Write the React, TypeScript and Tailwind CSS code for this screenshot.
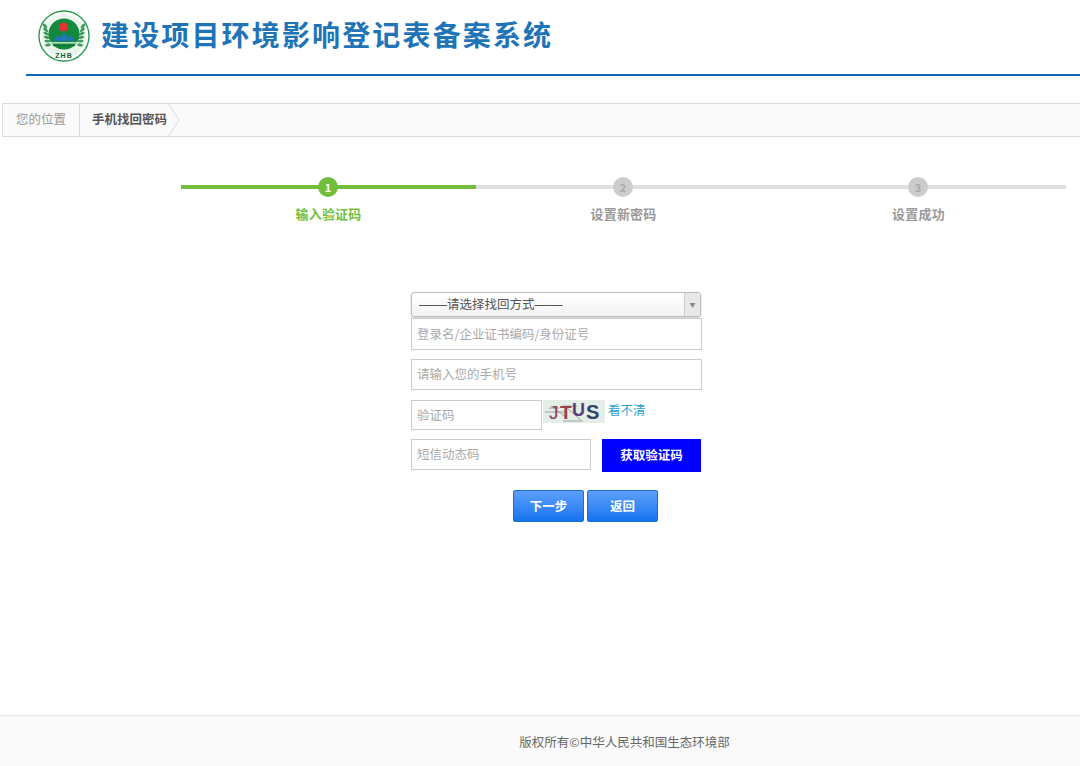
const font = { fontFamily: '"Noto Sans CJK SC", "Liberation Sans", sans-serif' };

const steps = [
  { n: 1, label: '输入验证码', active: true },
  { n: 2, label: '设置新密码', active: false },
  { n: 3, label: '设置成功', active: false },
];

function Logo() {
  const leaves = [0, 1, 2, 3, 4, 5];
  return (
    <svg width="52" height="52" viewBox="0 0 52 52" className="shrink-0">
      <circle cx="26" cy="26" r="25" fill="#fff" stroke="#2f9a52" strokeWidth="1.4" />
      <circle cx="26" cy="26" r="22" fill="#e9f4ec" />
      {leaves.map((i) => (
        <g key={i} fill="#3d9a58">
          <ellipse cx={7 + i * 0.6} cy={16 + i * 3.8} rx="3" ry="1.4" transform={`rotate(${50 - i * 12} ${7 + i * 0.6} ${16 + i * 3.8})`} />
          <ellipse cx={45 - i * 0.6} cy={16 + i * 3.8} rx="3" ry="1.4" transform={`rotate(${-50 + i * 12} ${45 - i * 0.6} ${16 + i * 3.8})`} />
        </g>
      ))}
      <circle cx="26" cy="24" r="15.5" fill="#128a3e" />
      <circle cx="25.5" cy="17" r="4.6" fill="#e5312f" />
      <path d="M15 31 L19 25 L21.5 28 L26 22.5 L30.5 28 L33 25 L37 31 Z" fill="#1f76b8" />
      <rect x="13" y="32" width="26" height="1.6" fill="#b9dcc0" />
      <rect x="15" y="35" width="22" height="1.2" fill="#0d6f30" />
      <text x="26" y="48" textAnchor="middle" fontSize="7" fontWeight="700" fill="#1f5c33" fontFamily="Liberation Sans, sans-serif" letterSpacing="1">ZHB</text>
    </svg>
  );
}

function Captcha() {
  return (
    <svg width="62" height="23" viewBox="0 0 62 23" className="shrink-0 bg-[#e4ede8]">
      <path d="M2 12 H22 M8 6 L24 18 M20 21 H40 M24 8 L38 20 M6 8 H16 M20 6 H34" stroke="#8a8f8a" strokeWidth="0.8" fill="none" />
      <text x="6" y="18.5" fontSize="19" fill="#8d3f55" fontFamily="Liberation Sans, sans-serif">J</text>
      <text x="17" y="18.5" fontSize="19" fontWeight="700" fill="#9a4048" fontFamily="Liberation Sans, sans-serif">T</text>
      <text x="29" y="16" fontSize="18" fontWeight="700" fill="#5d3f7c" fontFamily="Liberation Sans, sans-serif">U</text>
      <text x="43" y="18.5" fontSize="20" fontWeight="700" fill="#2f4468" fontFamily="Liberation Sans, sans-serif">S</text>
    </svg>
  );
}

export default function App() {
  return (
    <div className="min-h-[766px] flex flex-col bg-white text-[#333]" style={font}>
      <header className="ml-[26px] h-[76px] border-b-2 border-[#0f69b4] flex items-start pl-[12px] pt-[10px]">
        <Logo />
        <h1 className="ml-[11px] mt-[1px] text-[28px] leading-[46px] font-bold tracking-[2.15px] text-[#1f74b8]">
          建设项目环境影响登记表备案系统
        </h1>
      </header>

      <nav className="mt-[27px] ml-[2px] h-[34px] bg-[#fafafa] border-y border-[#dcdcdc] border-l flex items-center text-[12.5px]">
        <span className="w-[77px] h-full flex items-center justify-center pb-[1px] border-r border-[#d8d8d8] text-[#999]">您的位置</span>
        <span className="ml-[12px] pb-[1px] font-bold text-[#555]">手机找回密码</span>
        <svg width="14" height="34" viewBox="0 0 14 34">
          <path d="M1 0 L12 17 L1 34" fill="none" stroke="#d8d8d8" />
        </svg>
      </nav>

      <div className="mt-[40px] ml-[181px] w-[885px] grid grid-cols-3">
        {steps.map((s) => (
          <div key={s.n} className="flex flex-col items-center">
            <div className="relative w-full h-[20px] flex items-center justify-center">
              <div className={`absolute inset-x-0 top-[8px] h-[4px] ${s.active ? 'bg-[#71bf3d]' : 'bg-[#e0e0e0]'}`} />
              <div className={`relative -ml-[1px] w-[20px] h-[20px] rounded-full flex items-center justify-center text-[11px] font-bold ${s.active ? 'bg-[#71bf3d] text-white' : 'bg-[#cccccc] text-[#aaa]'}`}>
                {s.n}
              </div>
            </div>
            <span className={`mt-[8px] text-[13px] leading-[18px] font-bold tracking-[0.2px] ${s.active ? 'text-[#71bf3d]' : 'text-[#999]'}`}>{s.label}</span>
          </div>
        ))}
      </div>

      <form className="mt-[69px] ml-[411px] w-[291px] flex flex-col text-[12.5px]">
        <div className="w-[290px] h-[25px] rounded-[3px] border border-[#bbb] shadow-[0_1px_2px_rgba(0,0,0,0.2)] bg-gradient-to-b from-white to-[#f3f3f3] flex items-center">
          <span className="flex-1 pl-[7px] text-[#555] whitespace-nowrap">
            <span className="text-[14px]" style={{ fontFamily: '"Liberation Sans", sans-serif' }}>——</span>
            请选择找回方式
            <span className="text-[14px]" style={{ fontFamily: '"Liberation Sans", sans-serif' }}>——</span>
          </span>
          <span className="w-[16px] h-full border-l border-[#ccc] bg-[#e8e8e8] rounded-r-[3px] flex items-center justify-center text-[6px] text-[#888]">▼</span>
        </div>
        <input placeholder="登录名/企业证书编码/身份证号" className="mt-[1px] h-[32px] border border-[#ccc] px-[5px] pb-[2px] outline-none placeholder:text-[#aaa]" />
        <input placeholder="请输入您的手机号" className="mt-[9px] h-[31px] border border-[#ccc] px-[5px] pb-[2px] outline-none placeholder:text-[#aaa]" />
        <div className="mt-[10px] flex items-start">
          <input placeholder="验证码" className="w-[131px] h-[30px] border border-[#ccc] px-[5px] pb-[2px] outline-none placeholder:text-[#aaa]" />
          <div className="ml-[1px]"><Captcha /></div>
          <a className="ml-[3px] mt-[1px] text-[12.5px] leading-[18px] text-[#2a9fd6] whitespace-nowrap">看不清</a>
        </div>
        <div className="mt-[9px] flex items-start">
          <input placeholder="短信动态码" className="w-[180px] h-[31px] border border-[#ccc] px-[5px] pb-[2px] outline-none placeholder:text-[#aaa]" />
          <button type="button" className="ml-[11px] w-[99px] h-[33px] bg-[#0000ff] text-white font-bold text-[12.5px]">获取验证码</button>
        </div>
        <div className="mt-[18px] ml-[102px] flex gap-[3px]">
          <button type="button" className="w-[71px] h-[32px] rounded-[2px] border border-[#1c6fc9] bg-gradient-to-b from-[#5b9ffb] to-[#0f74ee] text-white font-bold text-[12.5px]">下一步</button>
          <button type="button" className="w-[71px] h-[32px] rounded-[2px] border border-[#1c6fc9] bg-gradient-to-b from-[#5b9ffb] to-[#0f74ee] text-white font-bold text-[12.5px]">返回</button>
        </div>
      </form>

      <footer className="mt-auto h-[51px] border-t border-[#e5e5e5] bg-[#fafafa] flex items-center justify-center pl-[169px] pt-[2px] text-[12.5px] text-[#666]">
        版权所有©中华人民共和国生态环境部
      </footer>
    </div>
  );
}
